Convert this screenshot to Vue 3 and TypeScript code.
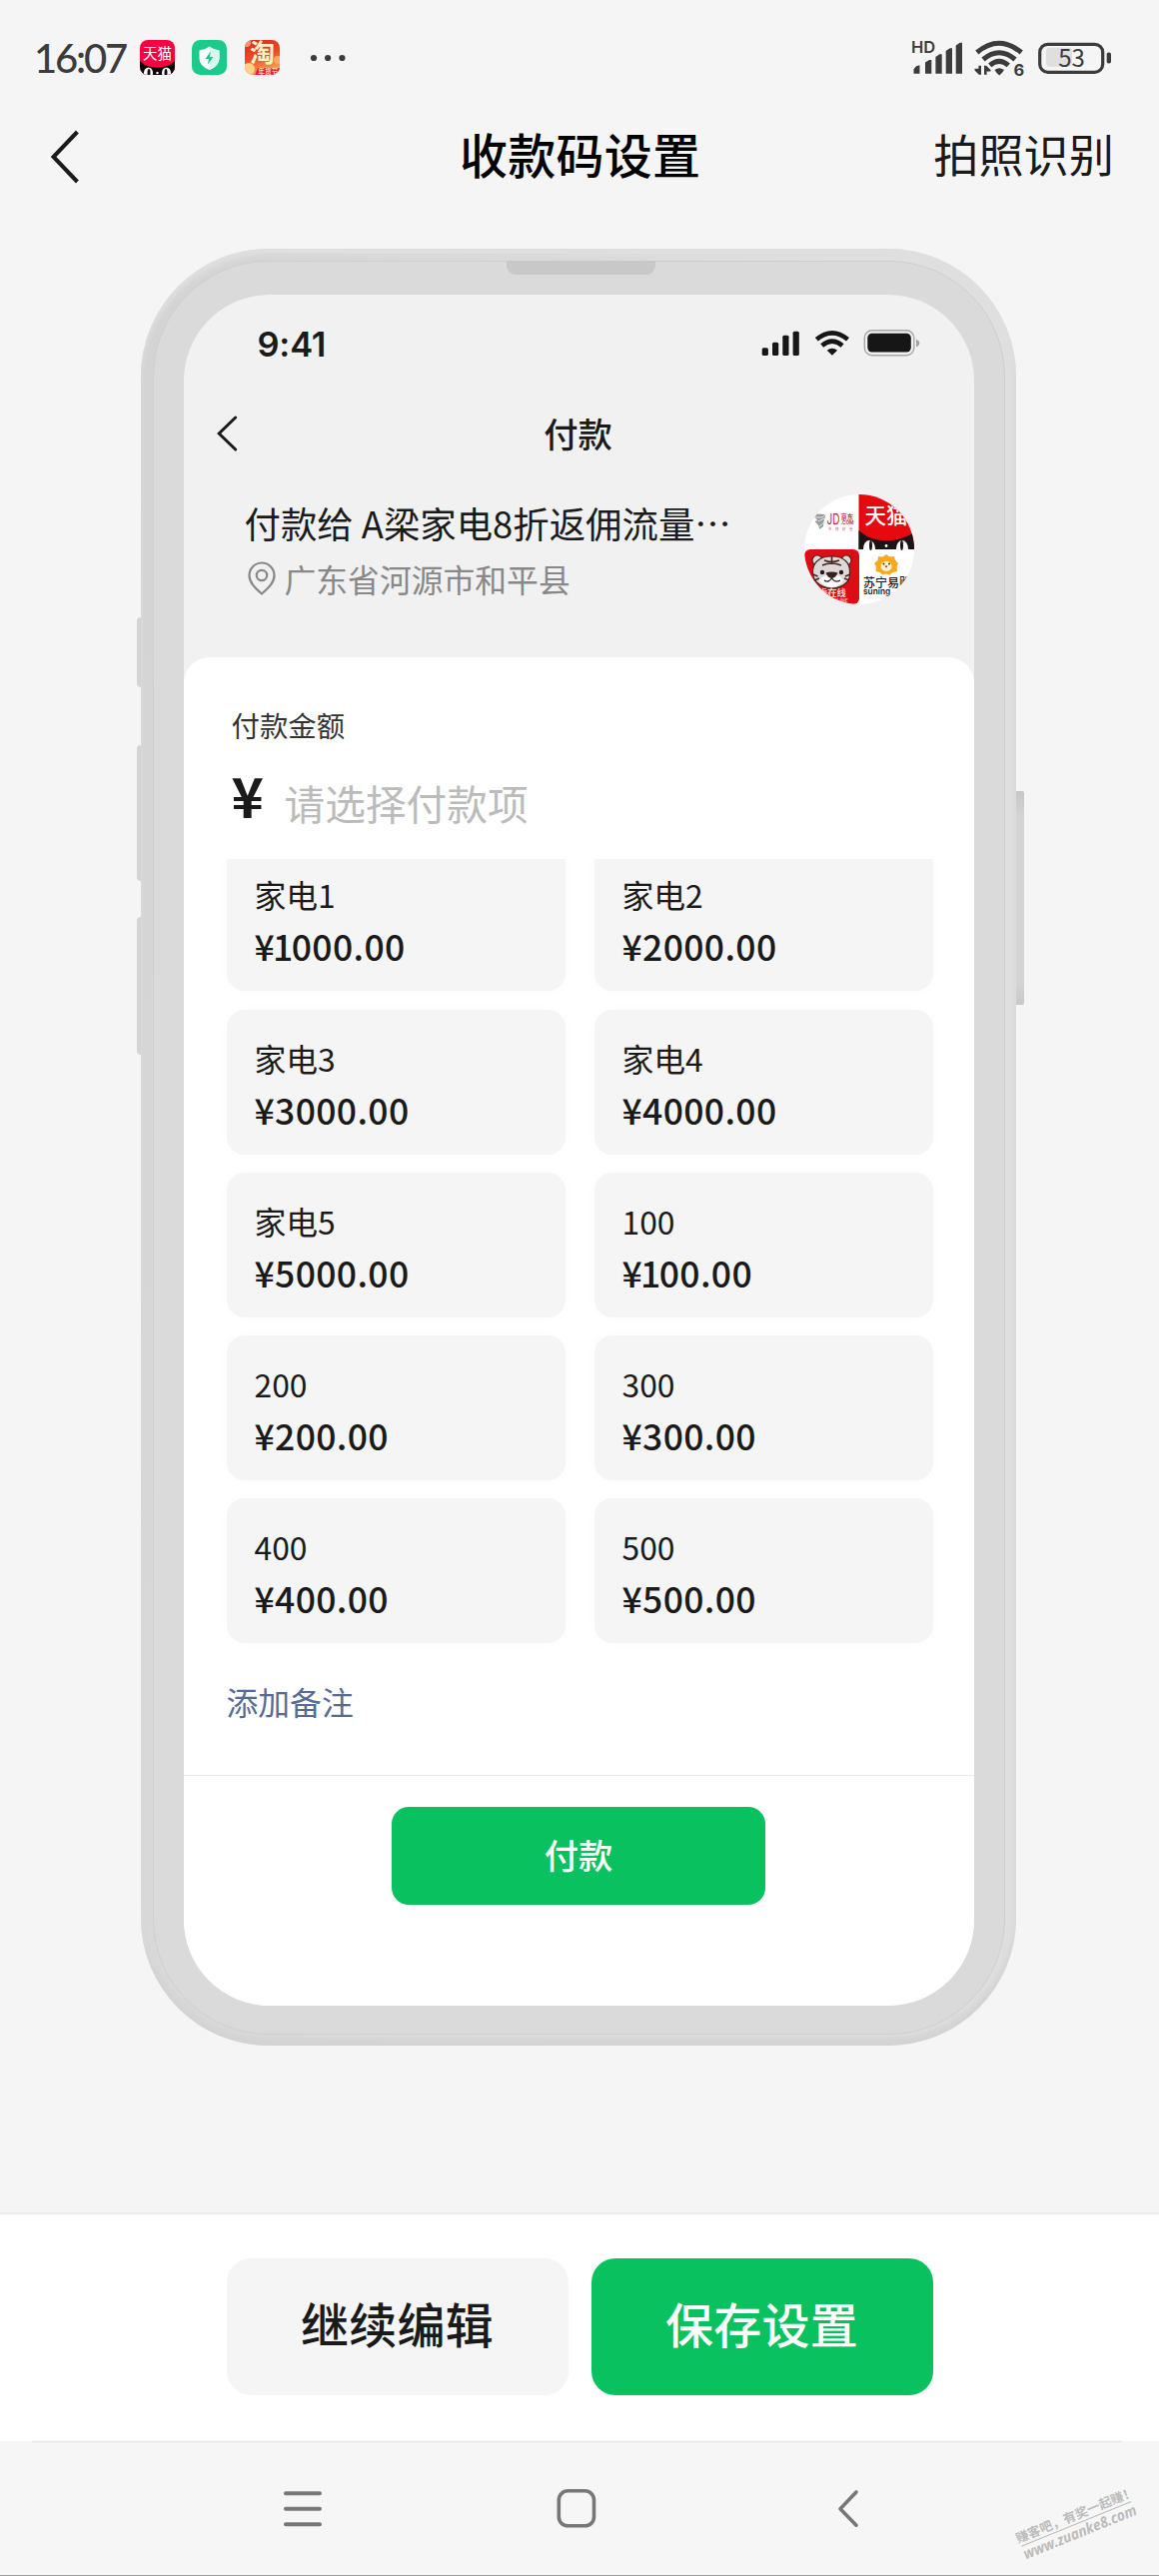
<script setup lang="ts">
interface PayItem {
  name: string
  amount: string
}

const items: PayItem[] = [
  { name: '家电1', amount: '1000.00' },
  { name: '家电2', amount: '2000.00' },
  { name: '家电3', amount: '3000.00' },
  { name: '家电4', amount: '4000.00' },
  { name: '家电5', amount: '5000.00' },
  { name: '100', amount: '100.00' },
  { name: '200', amount: '200.00' },
  { name: '300', amount: '300.00' },
  { name: '400', amount: '400.00' },
  { name: '500', amount: '500.00' },
]
</script>

<template>
  <div class="page" lang="zh-CN">
    <header class="sysbar">
      <span class="clock">16:07</span>
      <svg class="app" viewBox="0 0 35 35">
        <defs><clipPath id="appA"><rect width="35" height="35" rx="8" /></clipPath></defs>
        <g clip-path="url(#appA)">
          <rect width="35" height="35" fill="#fb0040" />
          <path d="M0 21l5 4q12 5 25 0l5-4v14H0z" fill="#0c0508" />
          <ellipse cx="8.500" cy="33" rx="4.500" ry="5.500" fill="#fff" />
          <ellipse cx="26.500" cy="33" rx="4.500" ry="5.500" fill="#fff" />
          <ellipse cx="9" cy="33" rx="1.500" ry="4" fill="#111" />
          <ellipse cx="26" cy="33" rx="1.500" ry="4" fill="#111" />
          <circle cx="17.500" cy="33" r="1.200" fill="#fff" />
        </g>
        <text x="17.500" y="19" text-anchor="middle" font-size="14.500" fill="#fff">天猫</text>
      </svg>
      <svg class="app" viewBox="0 0 35 35">
        <rect width="35" height="35" rx="8.500" fill="#1acb8b" />
        <path d="M17.500 6.500q4.500 3.600 10 4v8q0 7.500-10 11.500-10-4-10-11.500v-8q5.500-.4 10-4z" fill="#fff" />
        <path d="M17.500 6.500q4.500 3.600 10 4v8q0 7.500-10 11.500z" fill="#dcf7ed" />
        <path d="M18.800 11.500l-5.300 7.500h3.400l-1 5.500 5.600-7.600h-3.600z" fill="#1acb8b" />
      </svg>
      <svg class="app" viewBox="0 0 35 35">
        <defs>
          <clipPath id="appB"><rect width="35" height="35" rx="8" /></clipPath>
          <linearGradient id="tao" x1="0" y1="0" x2="0.300" y2="1">
            <stop offset="0" stop-color="#d8281f" />
            <stop offset="0.550" stop-color="#ee4a24" />
            <stop offset="1" stop-color="#f9a24a" />
          </linearGradient>
        </defs>
        <g clip-path="url(#appB)">
          <rect width="35" height="35" fill="url(#tao)" />
          <circle cx="4" cy="29" r="6" fill="#fbd08a" />
          <circle cx="33" cy="20" r="4" fill="#fba765" />
          <circle cx="2" cy="3" r="4" fill="#f49a6a" />
          <path d="M13 28h22v7H10z" fill="#e3203a" />
        </g>
        <text x="17.500" y="22" text-anchor="middle" font-size="25" font-weight="700" fill="#fff0c8">淘</text>
        <text x="23.300" y="34" text-anchor="middle" font-size="6.700" font-weight="700" fill="#ffd9b0">年货节</text>
      </svg>
      <svg class="more" viewBox="0 0 36 8" fill="#3c3c3c">
        <circle cx="4" cy="4" r="3.100" /><circle cx="18.100" cy="4" r="3.100" /><circle cx="32.400" cy="4" r="3.100" />
      </svg>
      <svg class="radios" viewBox="0 0 202 42" fill="#3c3c3c">
        <!-- mobile signal -->
        <text x="0" y="16.300" font-size="16.500" font-weight="600" class="latin">HD</text>
        <path d="M2.500 36.700v-4.500l2.500-3 3.500-1v8.500zM14 36.700V25.500l4-2.500h2.300v13.700zM24.400 36.700V20l4-2.700h2.300v19.400zM34.700 36.700V14l4-2.700H41v25.400zM44.700 36.700V8.500l4-2.800H51v31z" />
        <!-- wireless -->
        <g fill="none" stroke="#3c3c3c" stroke-width="5">
          <path d="M65.800 15.500q22-18.500 44.400 0" />
          <path d="M72 22.500q16-13.500 32 0" />
          <path d="M78.700 28.300q9.300-8 18.600 0" />
        </g>
        <path d="M83.500 33q4.500-3.600 9.500 0-2 3.500-4.800 5.500-2.700-2-4.700-5.500z" />
        <path d="M70 28.700v9h-2.200l-4.300-4.300v-1.600h3.900v-3.100zM73 37.700v-9h2.200l4.300 4.300v1.600h-3.900v3.100z" />
        <text x="102.500" y="39.300" font-size="16.500" font-weight="700" class="latin">6</text>
        <!-- battery -->
        <rect x="135" y="10.700" width="26" height="19" rx="4" fill="#dfdfdf" />
        <rect x="128.700" y="7.300" width="63" height="28" rx="8" fill="none" stroke="#3c3c3c" stroke-width="3.200" />
        <rect x="195.700" y="15.500" width="4.300" height="11" rx="1.800" />
        <text x="160.500" y="30" text-anchor="middle" font-size="24" class="cond">53</text>
      </svg>
    </header>

    <nav class="titlebar">
      <svg class="back" viewBox="0 0 30 56"><path d="M27.400 3L3.500 28l23.900 25" /></svg>
      <h1>收款码设置</h1>
      <a>拍照识别</a>
    </nav>

    <main class="stage">
      <div class="phone">
        <i class="key k1"></i><i class="key k2"></i><i class="key k3"></i><i class="key k4"></i>
        <div class="bezel">
          <i class="speaker"></i>
          <div class="screen">
            <div class="demo-status">
              <b>9:41</b>
              <svg viewBox="0 0 160 30">
                <g fill="#161616">
                  <rect x="1.700" y="18.200" width="6.200" height="7.700" rx="1.500" />
                  <rect x="12" y="12.800" width="6.200" height="13.100" rx="1.500" />
                  <rect x="22.300" y="5.800" width="6.200" height="20.100" rx="1.500" />
                  <rect x="32.600" y="1.800" width="6.200" height="24.100" rx="1.500" />
                  <rect x="107.300" y="3.800" width="43.500" height="18.700" rx="4.500" />
                  <path d="M66.700 20.700q5.200-3.800 10.400 0L71.900 25.700z" />
                </g>
                <g fill="none" stroke="#161616" stroke-width="4.600">
                  <path d="M56.300 9.800q15.600-13 31.200 0" />
                  <path d="M61.700 16q10.200-8.600 20.400 0" />
                </g>
                <rect x="104.300" y="0.800" width="49.500" height="25" rx="7.500" fill="none" stroke="#a6a6a6" stroke-width="1.400" />
                <path d="M156 9.800q3.300 1.200 3.300 3.800t-3.300 3.800z" fill="#a0a0a0" />
              </svg>
            </div>
            <div class="demo-title">
              <svg viewBox="0 0 20 36"><path d="M18.700 2L2.200 18l16.500 16" /></svg>
              <span>付款</span>
            </div>
            <div class="payee">
              <div class="who">
                <p class="name">付款给 A梁家电8折返佣流量…</p>
                <p class="place">
                  <svg viewBox="0 0 28 34"><path d="M14 32.500C6.500 26 1.500 21 1.500 14a12.500 12.500 0 0 1 25 0c0 7-5 12-12.500 18.500z" /><circle cx="14" cy="14" r="5.200" /></svg>
                  <span>广东省河源市和平县</span>
                </p>
              </div>
              <svg class="avatar" viewBox="0 0 110 110">
                <defs><clipPath id="round"><circle cx="55" cy="55" r="55" /></clipPath></defs>
                <g clip-path="url(#round)">
                  <rect width="110" height="110" fill="#fff" />
                  <!-- JD -->
                  <path d="M8.500 21.500l5-2 8 .5-2 7-.5 5-3.500 3-1.500-4.500-3.500-3.500 3-1z" fill="#9b9b9b" />
                  <path d="M10 23l8 0 3-3M14 27l6-3M15 32l4-3" stroke="#e8e8e8" stroke-width="1" fill="none" />
                  <text x="22.500" y="30.300" font-size="14" fill="#b02a45" class="latin" textLength="13" lengthAdjust="spacingAndGlyphs">JD</text>
                  <text x="36.500" y="25" font-size="6.300" font-weight="700" fill="#b04058">京东</text>
                  <text x="36.500" y="30.300" font-size="5.300" font-weight="700" fill="#b04058" class="latin" textLength="13" lengthAdjust="spacingAndGlyphs">.COM</text>
                  <text x="24" y="35.800" font-size="3.500" letter-spacing="3.500" fill="#b05a6c">多快好省</text>
                  <!-- Tmall -->
                  <rect x="54.500" width="56" height="55" fill="#e60a10" />
                  <path d="M54.500 36l8 6q20 8.500 40 0l8-4v17h-56z" fill="#1d1214" />
                  <ellipse cx="65" cy="54.500" rx="6" ry="8.500" fill="#fff" />
                  <ellipse cx="98" cy="54.500" rx="6" ry="8.500" fill="#fff" />
                  <ellipse cx="66.500" cy="51" rx="1.500" ry="5" fill="#1d1214" />
                  <ellipse cx="97.500" cy="51" rx="1.500" ry="5" fill="#1d1214" />
                  <circle cx="82" cy="51.500" r="1.400" fill="#fff" />
                  <text x="60.500" y="28.500" font-size="21.500" font-weight="500" fill="#fff">天猫</text>
                  <!-- tiger -->
                  <rect y="55" width="55" height="55" rx="6" fill="#dc0d17" />
                  <g stroke="#4a2620" stroke-width="1.200">
                    <circle cx="13" cy="66" r="5" fill="#dcd9d8" />
                    <circle cx="42" cy="66" r="5" fill="#dcd9d8" />
                    <path d="M27.500 62c13 0 18 7 18 15 0 5 0 8-3 11-4 4-10 6-15 6s-11-2-15-6c-3-3-4-6-4-11 0-8 6-15 19-15z" fill="#dcd9d8" />
                    <path d="M27.500 62v8M20 66q7 3 15 0M18 71q9-4 19 0M8.500 80l5 2M10 86l5-2M46 80l-5 2M45 86l-5-2" fill="none" stroke-width="1.600" />
                  </g>
                  <path d="M27.500 80c4 0 9 2 12 6q-5 7-12 7t-13-7c3-4 9-6 13-6z" fill="#fff" />
                  <circle cx="18" cy="78" r="2.200" fill="#2a1818" /><circle cx="37" cy="78" r="2.200" fill="#2a1818" />
                  <path d="M21.500 78.500q6-2 12 0-2 5-6 5.500-4-.5-6-5.500z" fill="#3a211d" />
                  <path d="M20 86q4 3 7.500-2 3.500 5 8.500 2" fill="none" stroke="#3a211d" stroke-width="1.300" />
                  <text x="14" y="102.300" font-size="9.300" font-weight="700" fill="#ffd9d9">虎在线</text>
                  <text x="25" y="108" font-size="5" font-weight="700" fill="#f7a5a5" class="latin">ONLINE</text>
                  <!-- Suning -->
                  <path d="M82 60l3.500 2.500 4.500-.5 1 4 3 3-1.500 3.500L93 77l-4.500 1-3 2.500-3.500-1-3.500 1-3-2.500-4-1 .5-4.500L70 69l3.500-3 .5-4 4.500.5z" fill="#f6a91f" />
                  <ellipse cx="82" cy="72" rx="5.500" ry="5" fill="#fdf0d0" />
                  <circle cx="79.500" cy="69.500" r="1" fill="#5a3510" /><circle cx="85" cy="69.500" r="1" fill="#5a3510" />
                  <path d="M80.500 71.500h3l-1.500 2z" fill="#5a3510" />
                  <text x="59" y="92.500" font-size="12" font-weight="500" fill="#1a1a1a">苏宁易购</text>
                  <text x="59" y="100" font-size="8.300" font-weight="600" fill="#1a1a1a" class="latin">suning</text>
                  <path d="M88 100l2-2" stroke="#555" />
                </g>
              </svg>
            </div>
            <section class="panel">
              <p class="label">付款金额</p>
              <div class="amount"><b>¥</b><span>请选择付款项</span></div>
              <div class="list">
                <div class="grid">
                  <div v-for="item in items" :key="item.name" class="card">
                    <span class="item-name">{{ item.name }}</span>
                    <span class="price">¥<span :class="{ one: item.amount.startsWith('1') }">{{ item.amount[0] }}</span>{{ item.amount.slice(1) }}</span>
                  </div>
                </div>
              </div>
              <a class="remark">添加备注</a>
              <div class="pay"><button>付款</button></div>
            </section>
          </div>
        </div>
      </div>
    </main>

    <footer class="actions">
      <button>继续编辑</button>
      <button class="save">保存设置</button>
    </footer>

    <div class="sysnav">
      <svg viewBox="0 0 1160 135" fill="none" stroke="#777" stroke-linecap="round" stroke-linejoin="round">
        <path d="M32 0.500H1123" stroke="#e6e6e6" stroke-width="1.500" stroke-linecap="butt" />
        <path d="M286 52.300h34M286 67.800h34M286 83.200h34" stroke-width="4" />
        <rect x="559.300" y="49.800" width="35.200" height="35" rx="9" stroke-width="3.600" />
        <path d="M857 51L841 67.700l16 16.500" stroke-width="3.600" />
        <g transform="translate(1022.300 105.200) rotate(-22.100)" stroke="none" fill="#bcbcbc" font-weight="700">
          <text x="-2" y="-4" font-size="12.800">赚客吧，有奖一起赚！</text>
          <rect y="-0.500" width="118.600" height="1" />
          <text x="-1" y="14" font-size="15" font-style="italic" textLength="121" lengthAdjust="spacingAndGlyphs" class="open">www.zuanke8.com</text>
        </g>
        <path d="M0 134.500h1160" stroke="#999" stroke-width="1" stroke-linecap="butt" />
      </svg>
    </div>
  </div>
</template>

<style>
body { margin: 0; background: #f5f5f5; }
</style>

<style scoped>
.page {
  width: 1160px; height: 2579px; display: flex; flex-direction: column; overflow: hidden;
  background: #f5f5f5; color: #1a1a1a;
  font-family: "Noto Sans CJK SC", "Noto Sans", sans-serif;
}
.page p, h1 { margin: 0; }
.page svg { display: block; flex: none; overflow: visible; }
.latin { font-family: Inter, sans-serif; }
.cond { font-family: "Noto Sans CJK SC", sans-serif; }
.open { font-family: "Open Sans", sans-serif; }
button { border: 0; font: inherit; padding: 0; }

.sysbar { height: 115px; display: flex; align-items: center; padding: 0 46px 0 34px; box-sizing: border-box; flex: none; }
.clock { width: 106px; font: 500 40px/60px Lato, sans-serif; letter-spacing: -2.200px; color: #3c3c3c; white-space: nowrap; }
.app { width: 35px; height: 35px; margin-right: 17.300px; }
.more { width: 36px; height: 8px; margin-left: 13px; }
.radios { width: 202px; height: 42px; margin-left: auto; }

.titlebar { height: 84px; flex: none; display: flex; align-items: center; padding: 0 45px 0 50px; }
.back { width: 30px; height: 56px; }
.back path, .demo-title path { fill: none; stroke: #1a1a1a; stroke-width: 4; }
h1 { flex: 1; text-align: center; font-size: 48px; line-height: 60px; font-weight: 500; color: #000; padding: 0 0 8px 147px; letter-spacing: .2px; }
.titlebar a { font-size: 45.200px; line-height: 60px; padding-bottom: 6px; }

.stage { flex: none; height: 2016px; display: flex; justify-content: center; align-items: flex-start; padding-top: 50px; box-sizing: border-box; }
.phone {
  position: relative; width: 876px; height: 1799.300px; box-sizing: border-box; padding: 12px 11.500px 11.500px 12px;
  border-radius: 128px; background: linear-gradient(100deg, #d3d3d3, #dfdfdf 60%);
  box-shadow: inset 0 6px 5px #dfdfdf, inset 0 -8px 6px #d3d3d3; left: -1px;
}
.key { position: absolute; left: -4px; width: 4px; background: #d4d4d4; border-radius: 4px 0 0 4px; }
.k1 { top: 369px; height: 70px; }
.k2 { top: 497px; height: 136px; }
.k3 { top: 669px; height: 138px; }
.k4 { left: auto; right: -7.700px; width: 7.700px; top: 543px; height: 214px; border-radius: 0 2px 2px 0; background: linear-gradient(#c6c6c6, #d4d4d4 12%, #d4d4d4 90%, #c8c8c8); }
.bezel { position: relative; height: 100%; box-sizing: border-box; border-radius: 116px; background: #dadada; border: 1px solid #cfcfcf; padding: 32.700px 30px 27.500px 29.500px; }
.speaker { position: absolute; left: 352.500px; top: -1px; width: 149.500px; height: 14px; border-radius: 0 0 9px 9px; background: #c8c8c8; }
.screen { height: 100%; border-radius: 86px; background: #f1f1f1; overflow: hidden; display: flex; flex-direction: column; }

.demo-status { height: 100px; flex: none; display: flex; justify-content: space-between; align-items: center; padding: 0 54px 0 74px; }
.demo-status b { font: 600 34.500px/50px Inter, sans-serif; letter-spacing: -.2px; padding-top: 1px; }
.demo-status svg { width: 160px; height: 30px; }
.demo-title { height: 79px; flex: none; display: flex; align-items: center; padding-left: 33px; }
.demo-title svg { width: 20px; height: 36px; }
.demo-title path { stroke-width: 3; stroke-linecap: round; }
.demo-title span { flex: 1; text-align: center; padding: 0 54px 3px 0; font-size: 34.300px; line-height: 50px; font-weight: 500; }
.payee { height: 184.300px; box-sizing: border-box; flex: none; display: flex; justify-content: space-between; align-items: flex-start; padding: 21.500px 59.500px 0 61px; }
.avatar { width: 110px; height: 110px; }
.name { font-size: 36.400px; line-height: 56px; white-space: nowrap; }
.place { display: flex; align-items: center; gap: 9px; color: #888; font-size: 31.800px; line-height: 54px; padding-top: 1px; }
.place svg { width: 28px; height: 34px; margin-left: 3px; }
.place path, .place circle { fill: none; stroke: #888; stroke-width: 2.200; }

.panel { flex: 1; background: #fff; border-radius: 26px 26px 0 0; display: flex; flex-direction: column; }
.label { padding: 48.500px 0 0 48px; font-size: 28.400px; line-height: 40px; color: #333; }
.amount { height: 113.500px; display: flex; align-items: center; padding-left: 48px; box-sizing: border-box; }
.amount b { font-size: 55px; line-height: 80px; width: 53px; padding-bottom: 17px; }
.amount span { font-size: 40.700px; line-height: 60px; color: #bbb; padding-top: 1px; }
.list { overflow: hidden; padding: 0 40px 16px 43px; flex: none; }
.grid { display: grid; grid-template-columns: 339.500px 339.500px; gap: 18.200px 28.500px; margin-top: -12.500px; }
.card { height: 145px; box-sizing: border-box; border-radius: 18px; background: #f5f5f5; box-shadow: 0 0 14px rgba(0, 0, 0, .02); padding: 24px 28px; display: flex; flex-direction: column; }
.item-name { font-size: 31.800px; line-height: 48px; }
.price { font-size: 35.500px; line-height: 55px; font-weight: 500; letter-spacing: .35px; }
.one { margin-left: -2px; letter-spacing: -1.600px; }
.remark { padding: 18px 0 0 43px; font-size: 31.800px; line-height: 48px; color: #576b95; }
.pay { margin-top: auto; height: 231px; box-sizing: border-box; border-top: 1px solid #e8e8e8; display: flex; justify-content: center; padding-top: 31px; flex: none; }
.pay button { width: 373.500px; height: 97.700px; border-radius: 17px; background: #0ac160; color: #fff; font-size: 34.300px; font-weight: 500; padding-bottom: 4px; }

.actions { height: 229px; flex: none; box-sizing: border-box; border-top: 2px solid #ebebeb; background: #fff; display: flex; justify-content: center; gap: 23px; padding-top: 44px; }
.actions button { width: 342px; height: 137.300px; border-radius: 24px; background: #f5f5f5; color: #1a1a1a; font-size: 48px; font-weight: 500; letter-spacing: .2px; padding-bottom: 9px; }
.actions .save { background: #0ac160; color: #fff; }
.sysnav { height: 135px; flex: none; background: #f6f6f6; }
.sysnav svg { width: 1160px; height: 135px; }
</style>
